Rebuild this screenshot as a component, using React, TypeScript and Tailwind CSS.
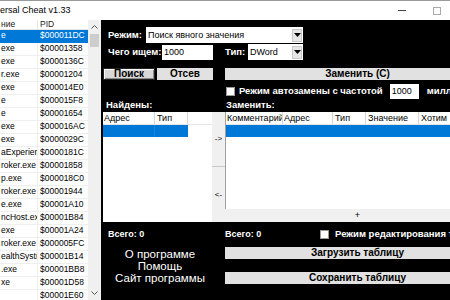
import React from "react";

const pids = [
  "$000011DC", "$00001358", "$0000136C", "$00001204", "$000014E0", "$000015F8",
  "$00001654", "$000016AC", "$0000029C", "$0000181C", "$00001858", "$000018C0",
  "$00001944", "$00001A10", "$00001B84", "$00001A24", "$000005FC", "$00001B14",
  "$00001BB8", "$00001D58", "$00001E60",
];
const names = [
  "e", "exe", "exe", "r.exe", "exe", "e", "e", "exe", "exe", "aExperienc",
  "roker.exe", "p.exe", "roker.exe", "e.exe", "ncHost.ex", "exe", "roker.exe",
  "ealthSystr", ".exe", "xe", "",
];

function Arrow() {
  return (
    <svg width="7" height="4" viewBox="0 0 7 4">
      <polygon points="0,0 7,0 3.5,4" fill="#000" />
    </svg>
  );
}

function Select({ w, text }: { w: string; text: string }) {
  return (
    <div className={`${w} h-[16px] bg-white flex items-center`}>
      <span className="flex-1 pl-[2px] text-[9px] leading-none text-black whitespace-nowrap overflow-hidden">{text}</span>
      <div className="w-[10px] h-[13px] mr-[1px] bg-[#e6e6e6] border border-[#c8c8c8] flex items-center justify-center">
        <Arrow />
      </div>
    </div>
  );
}

function Check() {
  return <div className="w-[9px] h-[9px] bg-white border border-[#9a9a9a] shrink-0" />;
}

export default function App() {
  return (
    <div className="w-[450px] h-[300px] overflow-hidden bg-white flex flex-col font-['Liberation_Sans',Arial,sans-serif]">
      {/* title bar */}
      <div className="h-[20px] shrink-0 flex items-center border-t border-[#9a9a9a] bg-white">
        <span className="text-[9px] leading-none text-black whitespace-nowrap">ersal Cheat v1.33</span>
        <div className="ml-auto flex items-center">
          <div className="w-[8px] h-px bg-[#444] mr-[27px]" />
          <div className="w-[8px] h-[8px] border border-[#aaa] mr-[9px]" />
        </div>
      </div>

      <div className="flex h-[280px]">
        {/* process list */}
        <div className="w-[101px] shrink-0 flex">
          <div className="w-[88px] flex flex-col text-[8.5px] leading-none">
            <div className="h-[14px] flex border-b border-[#e5e5e5]">
              <div className="w-[38px] border-r border-[#e5e5e5] flex items-center pl-px text-[#222]">ние</div>
              <div className="flex-1 flex items-center pl-[2px] text-[#222]">PID</div>
            </div>
            {pids.map((p, i) => {
              const sel = i === 0;
              return (
                <div
                  key={p}
                  className={`h-[13px] shrink-0 flex border-b ${sel ? "bg-[#0078d7] text-white border-[#0078d7]" : "text-black border-[#efefef]"}`}
                >
                  <div className={`w-[38px] border-r ${sel ? "border-[#0078d7]" : "border-[#efefef]"} flex items-center pl-px whitespace-nowrap overflow-hidden`}>
                    {names[i]}
                  </div>
                  <div className="flex-1 flex items-center pl-[2px] whitespace-nowrap overflow-hidden">{p}</div>
                </div>
              );
            })}
          </div>
          <div className="w-[13px] bg-[#f0f0f0] flex flex-col">
            <div className="h-[14px] flex items-center justify-center">
              <svg width="7" height="4" viewBox="0 0 7 4">
                <polyline points="0.5,3.5 3.5,0.5 6.5,3.5" fill="none" stroke="#555" strokeWidth="1" />
              </svg>
            </div>
            <div className="h-[13px] mx-[2px] bg-[#cdcdcd]" />
            <div className="flex-1" />
            <div className="h-[14px] flex items-center justify-center">
              <svg width="7" height="4" viewBox="0 0 7 4">
                <polyline points="0.5,0.5 3.5,3.5 6.5,0.5" fill="none" stroke="#555" strokeWidth="1" />
              </svg>
            </div>
          </div>
        </div>

        {/* black panel */}
        <div className="flex-1 min-w-0 bg-black overflow-hidden flex flex-col text-white">
          <div className="pt-[7px] pl-[7px]">
            <div className="flex items-center h-[16px]">
              <span className="w-[38px] font-bold text-[9.5px] leading-none">Режим:</span>
              <Select w="w-[157px]" text="Поиск явного значения" />
            </div>
            <div className="flex items-center h-[16px] mt-px">
              <span className="w-[54px] font-bold text-[9.5px] leading-none whitespace-nowrap">Чего ищем:</span>
              <div className="w-[51px] h-[15px] bg-white flex items-center pl-[2px] text-[9px] leading-none text-black">1000</div>
              <span className="ml-[12px] w-[23px] font-bold text-[9.5px] leading-none">Тип:</span>
              <Select w="w-[55px]" text="DWord" />
            </div>
          </div>

          <div className="flex mt-[8px]">
            {/* left column */}
            <div className="w-[124px] shrink-0 flex flex-col">
              <div className="h-[12px] flex pl-[2px] gap-[2px]">
                <div className="w-[52px] h-[12px] border border-[#222] bg-[#d8d8d8] shadow-[inset_1px_1px_0_#fff,inset_-1px_-1px_0_#8a8a8a] flex items-center justify-center text-black font-bold text-[10px] leading-none">
                  Поиск
                </div>
                <div className="w-[56px] h-[12px] bg-[#e1e1e1] flex items-center justify-center text-black font-bold text-[10px] leading-none">
                  Отсев
                </div>
              </div>
              <div className="mt-[19px] h-[12px] pl-[5px] flex items-center font-bold text-[9.5px] leading-none">Найдены:</div>
              <div className="mt-px h-[110px] flex pl-[2px]">
                <div className="w-[109px] bg-white flex flex-col text-[9px] leading-none text-black">
                  <div className="h-[13px] flex border-b border-[#e5e5e5]">
                    <div className="w-[52px] border-r border-[#d5d5d5] flex items-center pl-px">Адрес</div>
                    <div className="w-[33px] border-r border-[#d5d5d5] flex items-center pl-[2px]">Тип</div>
                  </div>
                  <div className="h-[12px] w-[85px] bg-[#0078d7] flex">
                    <div className="w-[52px] border-r border-[#1a86dd]" />
                  </div>
                </div>
                <div className="w-[13px] bg-[#f0f0f0] flex flex-col text-[8px] leading-none text-black">
                  <div className="h-[55px] border-b border-[#c8c8c8] flex items-center justify-center">-&gt;</div>
                  <div className="flex-1 flex items-center justify-center">&lt;-</div>
                </div>
              </div>
              <div className="mt-[6px] h-[12px] pl-[7px] flex items-center font-bold text-[9px] leading-none">Всего: 0</div>
              <div className="mt-[8px] pr-[6px] flex flex-col items-center text-[11.5px] leading-[12px]">
                <span>О программе</span>
                <span>Помощь</span>
                <span>Сайт программы</span>
              </div>
            </div>

            {/* right column */}
            <div className="w-[265px] shrink-0 flex flex-col">
              <div className="h-[12px] bg-[#e1e1e1] flex items-center justify-center text-black font-bold text-[10px] leading-none">
                Заменить (С)
              </div>
              <div className="mt-[3px] h-[16px] flex items-center">
                <div className="ml-px"><Check /></div>
                <span className="ml-[4px] w-[151px] font-bold text-[9.5px] leading-none whitespace-nowrap">Режим автозамены с частотой</span>
                <div className="w-[29px] h-[15px] bg-white flex items-center pl-[2px] text-[9px] leading-none text-black shrink-0">1000</div>
                <span className="ml-[8px] font-bold text-[9.5px] leading-none whitespace-nowrap">миллисекунд</span>
              </div>
              <div className="h-[12px] pl-px flex items-center font-bold text-[9.5px] leading-none">Заменить:</div>
              <div className="mt-px h-[110px] flex flex-col">
                <div className="flex-1 bg-white border-l border-[#a0a0a0] flex flex-col text-[9px] leading-none text-black">
                  <div className="h-[13px] flex border-b border-[#e5e5e5]">
                    <div className="w-[57px] border-r border-[#d5d5d5] flex items-center pl-px whitespace-nowrap overflow-hidden">Комментарий</div>
                    <div className="w-[50px] border-r border-[#d5d5d5] flex items-center pl-px">Адрес</div>
                    <div className="w-[33px] border-r border-[#d5d5d5] flex items-center pl-[2px]">Тип</div>
                    <div className="w-[53px] border-r border-[#d5d5d5] flex items-center pl-[2px]">Значение</div>
                    <div className="w-[60px] border-r border-[#d5d5d5] flex items-center pl-[2px]">Хотим</div>
                  </div>
                  <div className="h-[12px] bg-[#0078d7]" />
                </div>
                <div className="h-[13px] bg-[#f0f0f0] flex items-center justify-center text-black text-[9px] leading-none">+</div>
              </div>
              <div className="mt-[6px] h-[12px] flex items-center">
                <span className="w-[98px] font-bold text-[9px] leading-none">Всего: 0</span>
                <Check />
                <span className="ml-[6px] font-bold text-[9.5px] leading-none whitespace-nowrap">Режим редактирования таблицы</span>
              </div>
              <div className="mt-[7px] h-[12px] bg-[#e1e1e1] flex items-center justify-center text-black font-bold text-[10px] leading-none">
                Загрузить таблицу
              </div>
              <div className="mt-[13px] h-[12px] bg-[#e1e1e1] flex items-center justify-center text-black font-bold text-[10px] leading-none">
                Сохранить таблицу
              </div>
            </div>
          </div>
        </div>
      </div>
    </div>
  );
}
